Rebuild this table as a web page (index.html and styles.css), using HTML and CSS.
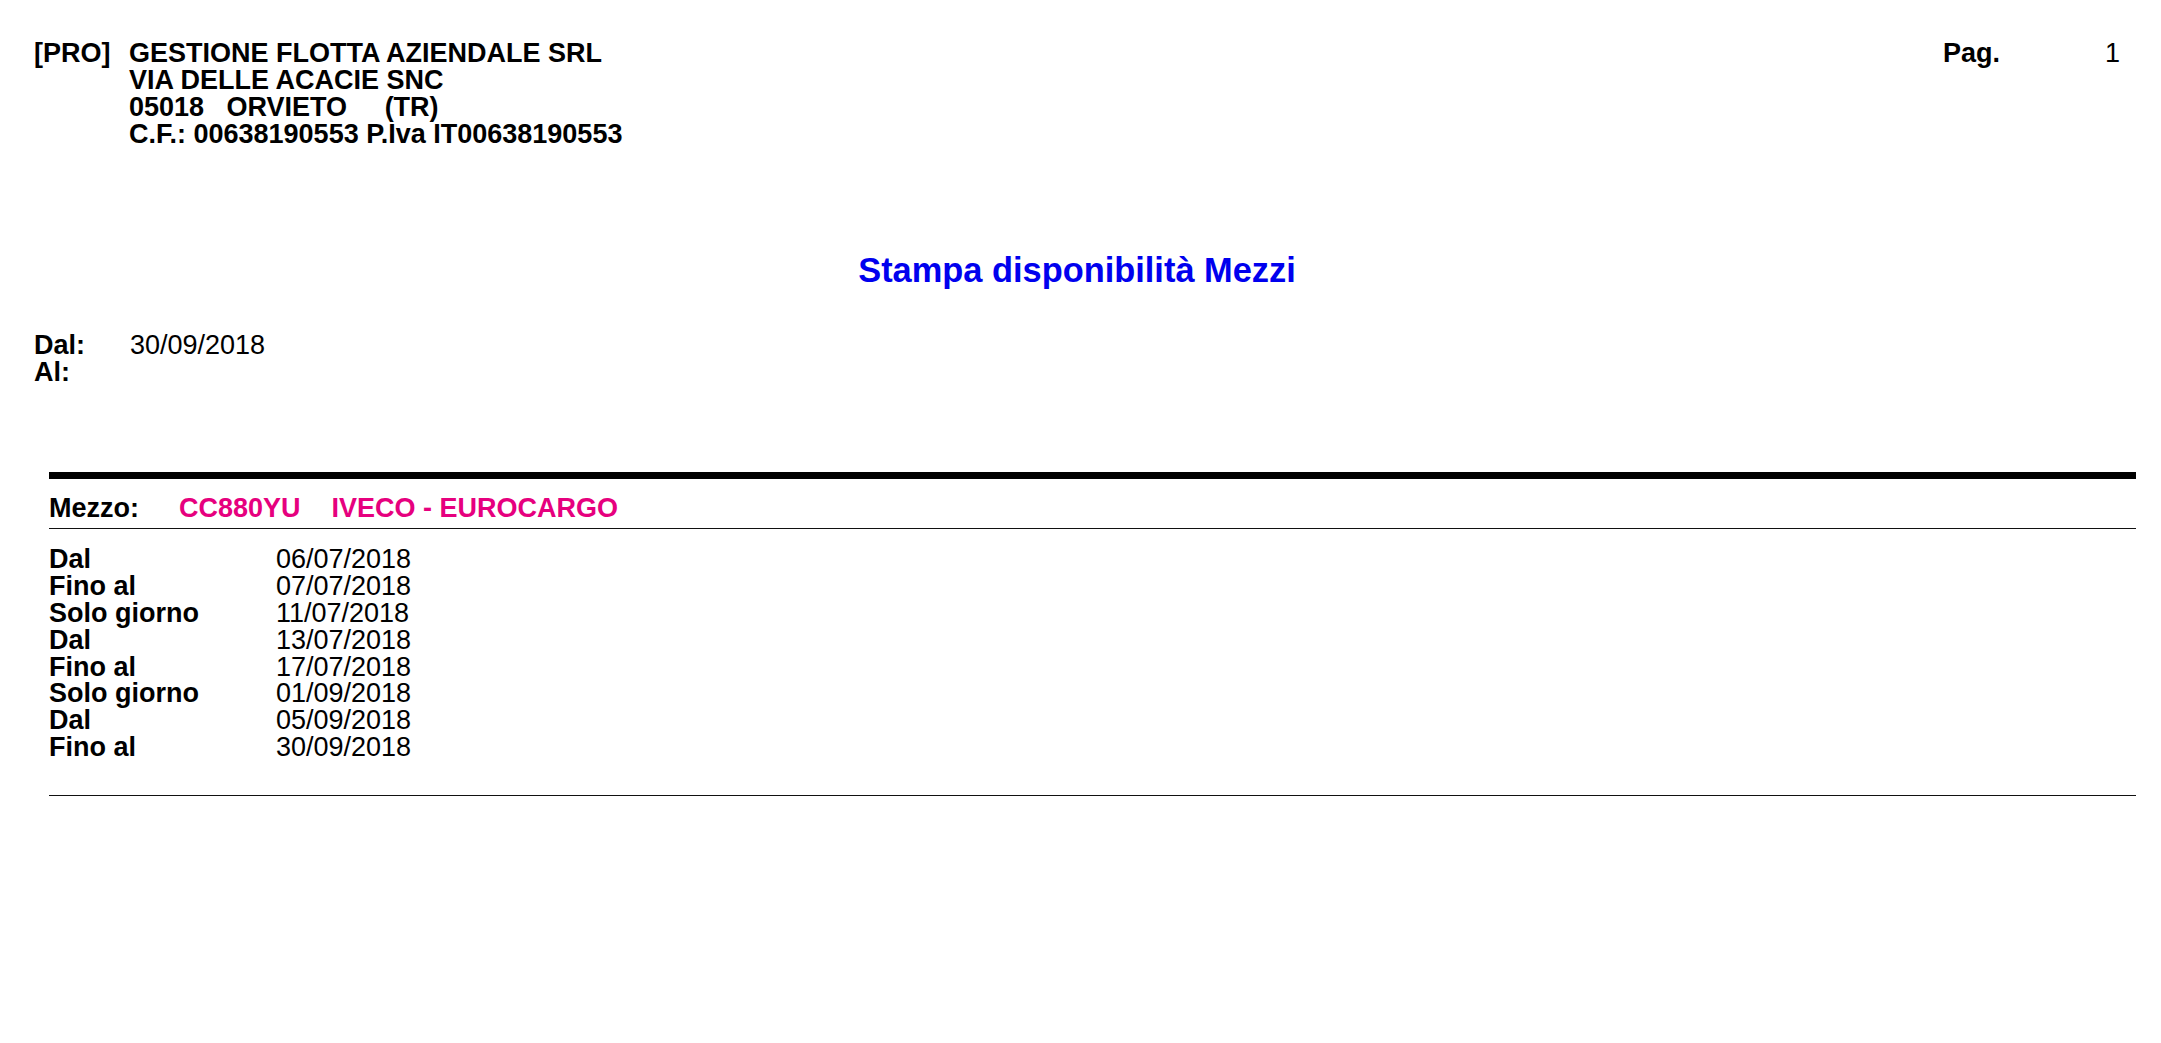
FILE: index.html
```html
<!DOCTYPE html>
<html lang="it">
<head>
<meta charset="utf-8">
<title>Stampa disponibilità Mezzi</title>
<link rel="stylesheet" href="styles.css">
</head>
<body>
<div class="page">
  <header class="head">
    <div class="company">
      <div class="code">[PRO]</div>
      <div class="addr">
        <div>GESTIONE FLOTTA AZIENDALE SRL</div>
        <div>VIA DELLE ACACIE SNC</div>
        <div>05018&nbsp;&nbsp; ORVIETO &nbsp;&nbsp;&nbsp;&nbsp;(TR)</div>
        <div>C.F.: 00638190553 P.Iva IT00638190553</div>
      </div>
    </div>
    <div class="pag">
      <span class="pag-label">Pag.</span>
      <span class="pag-num">1</span>
    </div>
  </header>

  <h1 class="title">Stampa disponibilità Mezzi</h1>

  <div class="range">
    <div class="range-label">Dal:</div><div class="range-val">30/09/2018</div>
    <div class="range-label">Al:</div><div class="range-val"></div>
  </div>
</div>

<section class="vehicle">
  <div class="veh-head">
    <span class="veh-label">Mezzo:</span>
    <span class="veh-plate">CC880YU</span>
    <span class="veh-model">IVECO - EUROCARGO</span>
  </div>
  <div class="rows">
    <div class="r-label">Dal</div><div class="r-date">06/07/2018</div>
    <div class="r-label">Fino al</div><div class="r-date">07/07/2018</div>
    <div class="r-label">Solo giorno</div><div class="r-date">11/07/2018</div>
    <div class="r-label">Dal</div><div class="r-date">13/07/2018</div>
    <div class="r-label">Fino al</div><div class="r-date">17/07/2018</div>
    <div class="r-label">Solo giorno</div><div class="r-date">01/09/2018</div>
    <div class="r-label">Dal</div><div class="r-date">05/09/2018</div>
    <div class="r-label">Fino al</div><div class="r-date">30/09/2018</div>
  </div>
</section>
</body>
</html>
```
FILE: styles.css
```css
html, body {
  margin: 0;
  padding: 0;
  background: #ffffff;
}

body {
  font-family: "Liberation Sans", Arial, sans-serif;
  font-size: 27px;
  line-height: 26.8px;
  color: #000000;
}

.page {
  padding: 40.4px 41px 0 34px;
}

.head {
  display: flex;
  justify-content: space-between;
  align-items: flex-start;
  font-weight: bold;
}

.company {
  display: flex;
}

.code {
  width: 95px;
}

.addr div {
  white-space: nowrap;
}

.pag {
  display: flex;
}

.pag-label {
  width: 162px;
}

.pag-num {
  font-weight: normal;
}

.title {
  margin: 102.5px 0 0 0;
  font-size: 34.4px;
  line-height: 40px;
  font-weight: bold;
  color: #0000ee;
  text-align: center;
}

.range {
  margin-top: 42px;
  display: grid;
  grid-template-columns: 96px 1fr;
}

.range-label {
  font-weight: bold;
}

.range-val {
  min-height: 26.8px;
}

.vehicle {
  margin: 86px 25px 0 49px;
  border-top: 7px solid #000000;
  border-bottom: 1px solid #111111;
  padding-bottom: 34px;
}

.veh-head {
  display: flex;
  padding: 16px 0 7px 0;
  border-bottom: 1px solid #111111;
  font-weight: bold;
}

.veh-label {
  width: 130px;
}

.veh-plate {
  color: #e6007e;
  margin-right: 31px;
}

.veh-model {
  color: #e6007e;
}

.rows {
  margin-top: 17px;
  display: grid;
  grid-template-columns: 227px 1fr;
}

.r-label {
  font-weight: bold;
}
```
